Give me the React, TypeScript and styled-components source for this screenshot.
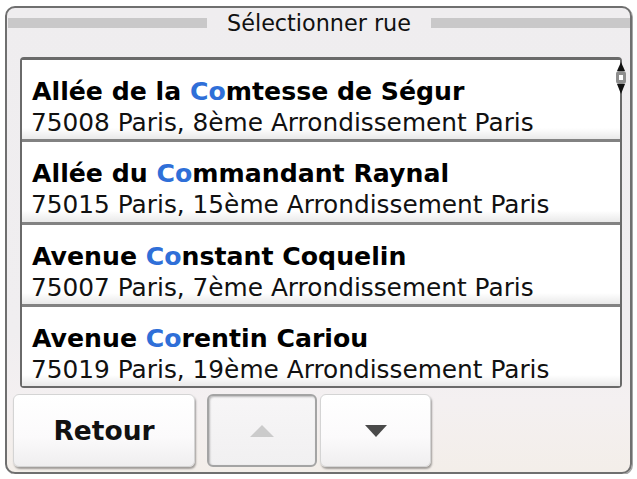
import React from "react";
import styled, { createGlobalStyle } from "styled-components";

const Global = createGlobalStyle`
  html, body { margin: 0; padding: 0; background: #ffffff; }
  body { font-family: "DejaVu Sans", Verdana, sans-serif; }
`;

const Frame = styled.div`
  box-sizing: border-box;
  margin: 6px 0 0 5px;
  width: 627px;
  height: 468px;
  border: 2px solid #6f6f6f;
  border-radius: 10px;
  box-shadow: 1px 1px 0 #a6a6a6;
  background: linear-gradient(#efedef 0%, #f0eef0 70%, #f4f0f1 85%, #f3eee9 100%);
  display: flex;
  flex-direction: column;
  overflow: hidden;
`;

const Header = styled.div`
  height: 29px;
  display: flex;
  align-items: center;
  gap: 20px;
  padding-left: 1px;
`;

const Bar = styled.div`
  flex: 1;
  height: 10px;
  background: #c9c8c9;
`;

const Title = styled.div`
  font-size: 22.3px;
  color: #111;
  white-space: nowrap;
`;

const ListBox = styled.div`
  position: relative;
  box-sizing: border-box;
  margin: 20px 8px 0 13px;
  height: 331px;
  border: 2px solid #6a6a6a;
  border-top-width: 3px;
  border-radius: 4px;
  background: #fff;
  display: flex;
  flex-direction: column;
`;

const Row = styled.div`
  flex: 1;
  box-sizing: border-box;
  padding: 16px 0 0 9px;
  background: linear-gradient(#ffffff 0%, #ffffff 86%, #e9e9e9 100%);
  border-bottom: 3px solid #828282;
  &:last-of-type { border-bottom: none; }
  white-space: nowrap;
  overflow: hidden;
`;

const Street = styled.div`
  font-weight: bold;
  font-size: 25.2px;
  line-height: 31px;
  color: #000;
  padding-left: 1px;
`;

const Hi = styled.span`
  color: #2f6fd8;
`;

const Place = styled.div`
  font-size: 24.8px;
  line-height: 31px;
  color: #111;
`;

const Knob = styled.svg`
  position: absolute;
  right: -7px;
  top: 0px;
`;

const Buttons = styled.div`
  display: flex;
  margin: 6px 0 0 6px;
  height: 73px;
`;

const Btn = styled.div<{ $w: number; $ml: number; $disabled?: boolean }>`
  box-sizing: border-box;
  width: ${(p) => p.$w}px;
  margin-left: ${(p) => p.$ml}px;
  height: 100%;
  border-radius: 6px;
  display: flex;
  align-items: center;
  justify-content: center;
  font-weight: bold;
  font-size: 26.5px;
  color: #111;
  background: ${(p) =>
    p.$disabled
      ? "linear-gradient(#f7f6f7, #f1f0f1)"
      : "linear-gradient(#ffffff 0%, #fbfafb 60%, #efeeef 100%)"};
  border: ${(p) => (p.$disabled ? "2px solid #a4a4a4" : "1px solid #d4d4d4")};
  box-shadow: ${(p) =>
    p.$disabled
      ? "inset 1px 1px 2px rgba(0,0,0,0.25)"
      : "1px 2px 2px rgba(0,0,0,0.35)"};
`;

const rows = [
  { pre: "Allée de la ", post: "mtesse de Ségur", place: "75008 Paris, 8ème Arrondissement Paris" },
  { pre: "Allée du ", post: "mmandant Raynal", place: "75015 Paris, 15ème Arrondissement Paris" },
  { pre: "Avenue ", post: "nstant Coquelin", place: "75007 Paris, 7ème Arrondissement Paris" },
  { pre: "Avenue ", post: "rentin Cariou", place: "75019 Paris, 19ème Arrondissement Paris" },
];

export default function App() {
  return (
    <>
      <Global />
      <Frame>
        <Header>
          <Bar />
          <Title>Sélectionner rue</Title>
          <Bar />
        </Header>
        <ListBox>
          {rows.map((r, i) => (
            <Row key={i}>
              <Street>
                {r.pre}
                <Hi>Co</Hi>
                {r.post}
              </Street>
              <Place>{r.place}</Place>
            </Row>
          ))}
          <Knob width="12" height="40" viewBox="0 0 12 40">
            <polygon points="6,2 10,11 2,11" fill="#111" />
            <rect x="1" y="11" width="10" height="13" rx="3" fill="#8e8e8e" />
            <rect x="4" y="15" width="4" height="5" fill="#ffffff" />
            <polygon points="2,24 10,24 6,34" fill="#111" />
          </Knob>
        </ListBox>
        <Buttons>
          <Btn $w={182} $ml={0}>Retour</Btn>
          <Btn $w={110} $ml={12} $disabled>
            <svg width="24" height="12" viewBox="0 0 24 12">
              <polygon points="12,0 24,12 0,12" fill="#cbcbcb" />
            </svg>
          </Btn>
          <Btn $w={111} $ml={3}>
            <svg width="22" height="12" viewBox="0 0 22 12">
              <polygon points="0,0 22,0 11,12" fill="#4a4a4a" />
            </svg>
          </Btn>
        </Buttons>
      </Frame>
    </>
  );
}
